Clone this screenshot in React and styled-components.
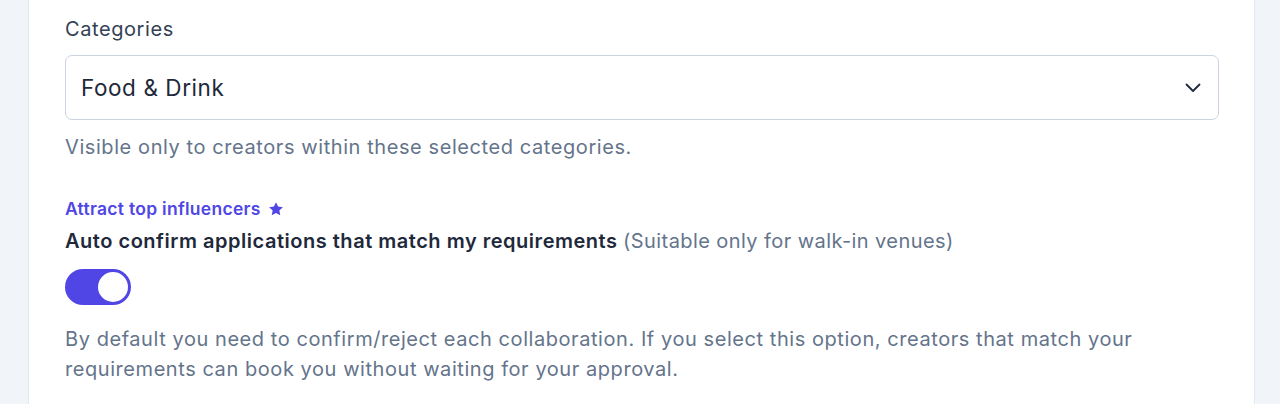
import React, { useState } from "react";
import styled, { createGlobalStyle } from "styled-components";

const GlobalStyle = createGlobalStyle`
    body {
        margin: 0;
        background-color: #f1f5f9;
        font-family: Inter, "Liberation Sans", sans-serif;
    }
`;

const Card = styled.div`
    margin: 0 25px 0 28px;
    background-color: #fff;
    border-left: 1px solid #e2e8f0;
    border-right: 1px solid #e2e8f0;
    padding: 14px 35px 20px 36px;
    min-height: 404px;
    box-sizing: border-box;
`;

const Label = styled.label`
    display: block;
    font-size: 20px;
    line-height: 30px;
    letter-spacing: 0.58px;
    color: #334155;
`;

const SelectBox = styled.div`
    margin-top: 11px;
    height: 65px;
    box-sizing: border-box;
    border: 1px solid #cbd5e1;
    border-radius: 7px;
    display: flex;
    align-items: center;
    justify-content: space-between;
    padding: 0 17px 0 15px;
    font-size: 22.5px;
    letter-spacing: 0.58px;
    color: #1e293b;
`;

const Hint = styled.p`
    margin: ${(p) => p.$top || 0}px 0 0;
    font-size: 20px;
    line-height: 30px;
    letter-spacing: ${(p) => p.$spacing || 0.58}px;
    color: #64748b;
`;

const Promo = styled.div`
    margin-top: 34px;
    display: flex;
    align-items: center;
    gap: 7px;
    font-size: 17.5px;
    line-height: 25px;
    font-weight: 600;
    letter-spacing: 0.28px;
    color: #4f46e5;
`;

const Title = styled.div`
    margin-top: 5px;
    font-size: 20px;
    line-height: 30px;
    font-weight: 600;
    letter-spacing: 0.52px;
    color: #1e293b;
`;

const Muted = styled.span`
    font-weight: 400;
    letter-spacing: 0.42px;
    color: #64748b;
`;

const Toggle = styled.button`
    margin-top: 13px;
    display: flex;
    align-items: center;
    width: 66px;
    height: 36px;
    padding: 3px;
    border: none;
    border-radius: 18px;
    cursor: pointer;
    background-color: ${(p) => (p.$on ? "#4f46e5" : "#e2e8f0")};
    justify-content: ${(p) => (p.$on ? "flex-end" : "flex-start")};
`;

const Knob = styled.span`
    width: 30px;
    height: 30px;
    border-radius: 50%;
    background-color: #fff;
`;

const App = () => {
    const [on, setOn] = useState(true);

    return (
        <>
            <GlobalStyle />
            <Card>
                <Label>Categories</Label>
                <SelectBox>
                    <span>Food &amp; Drink</span>
                    <svg width="16" height="10" viewBox="0 0 16 10" fill="none">
                        <path d="M1.5 1.5 8 8l6.5-6.5" stroke="#1e293b" strokeWidth="1.8" strokeLinecap="round" strokeLinejoin="round" />
                    </svg>
                </SelectBox>
                <Hint $top={12}>Visible only to creators within these selected categories.</Hint>

                <Promo>
                    Attract top influencers
                    <svg width="16" height="16" viewBox="0 0 24 24" fill="#4f46e5">
                        <path d="M12 1.8l3.1 6.6 7.2.9-5.3 5 1.4 7.1L12 17.9l-6.4 3.5L7 14.3 1.7 9.3l7.2-.9z" />
                    </svg>
                </Promo>
                <Title>
                    Auto confirm applications that match my requirements <Muted>(Suitable only for walk-in venues)</Muted>
                </Title>
                <Toggle $on={on} onClick={() => setOn(!on)}>
                    <Knob />
                </Toggle>
                <Hint $top={19} $spacing={0.56}>
                    By default you need to confirm/reject each collaboration. If you select this option, creators that match your requirements can book you without waiting for your approval.
                </Hint>
            </Card>
        </>
    );
};

export default App;
